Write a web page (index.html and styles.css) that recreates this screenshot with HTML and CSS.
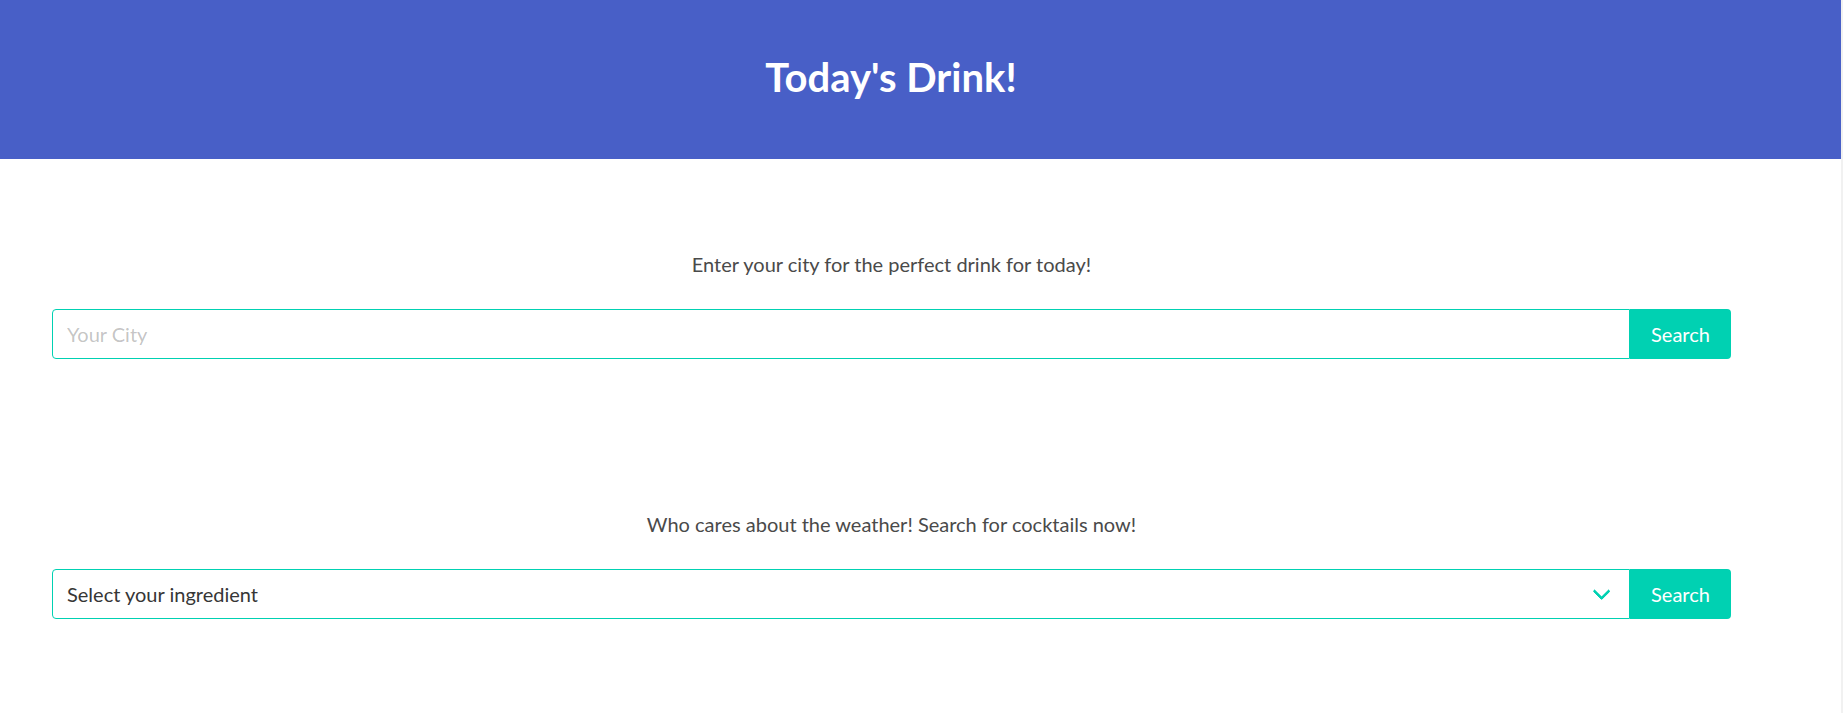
FILE: index.html
```html
<!DOCTYPE html>
<html lang="en">
<head>
<meta charset="utf-8">
<title>Today's Drink!</title>
<link rel="stylesheet" href="styles.css">
</head>
<body>
<div class="page">
  <header class="hero">
    <h1 class="hero-title">Today's Drink!</h1>
  </header>
  <main class="main">
    <section class="block">
      <p class="lead">Enter your city for the perfect drink for today!</p>
      <div class="addons">
        <input class="input" type="text" placeholder="Your City">
        <button class="btn" type="button">Search</button>
      </div>
    </section>
    <section class="block block-second">
      <p class="lead">Who cares about the weather! Search for cocktails now!</p>
      <div class="addons">
        <div class="select-wrap">
          <select class="select">
            <option>Select your ingredient</option>
          </select>
        </div>
        <button class="btn" type="button">Search</button>
      </div>
    </section>
  </main>
</div>
</body>
</html>
```

FILE: styles.css
```css
html {
  background: #f1f1f1;
}
body {
  margin: 0 2px 0 0;
  background: #ffffff;
  min-height: 100vh;
  font-family: Lato, "Liberation Sans", sans-serif;
  color: #4a4a4a;
}
.page {
  display: flex;
  flex-direction: column;
}
.hero {
  background: #485fc7;
  height: 159px;
  box-sizing: border-box;
  padding: 55px 59px 0 0;
}
.hero-title {
  margin: 0;
  text-align: center;
  color: #ffffff;
  font-size: 40px;
  font-weight: 700;
  line-height: 45px;
}
.main {
  padding: 90px 110px 0 52px;
}
.block-second {
  margin-top: 150px;
}
.lead {
  margin: 0 0 30px 0;
  text-align: center;
  font-size: 20px;
  line-height: 30px;
  color: #4a4a4a;
}
.addons {
  display: flex;
  height: 50px;
}
.input,
.select {
  flex: 1;
  box-sizing: border-box;
  height: 50px;
  border: 1px solid #00d1b2;
  border-radius: 4px 0 0 4px;
  padding: 0 14px;
  font-family: Lato, "Liberation Sans", sans-serif;
  font-size: 20px;
  color: #363636;
  background: #ffffff;
  outline: none;
  margin: 0;
}
.input::placeholder {
  color: rgba(54, 54, 54, 0.3);
}
.select-wrap {
  flex: 1;
  display: flex;
  position: relative;
}
.select {
  appearance: none;
  -webkit-appearance: none;
  width: 100%;
  padding-right: 40px;
}
.select-wrap::after {
  content: "";
  position: absolute;
  right: 22.5px;
  top: 50%;
  margin-top: -8.75px;
  width: 12.5px;
  height: 12.5px;
  box-sizing: border-box;
  border: 3px solid #00d1b2;
  border-top: 0;
  border-right: 0;
  border-radius: 2px;
  transform: rotate(-45deg);
  pointer-events: none;
}
.btn {
  flex: 0 0 101px;
  height: 50px;
  border: 0;
  border-radius: 0 4px 4px 0;
  background: #00d1b2;
  color: #ffffff;
  font-family: Lato, "Liberation Sans", sans-serif;
  font-size: 20px;
  padding: 0;
  margin: 0;
}
```
